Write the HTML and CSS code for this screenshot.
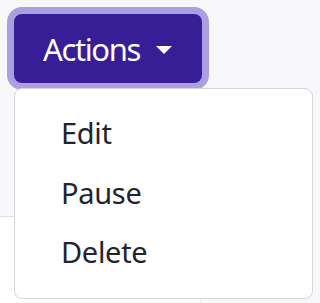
FILE: index.html
```html
<!DOCTYPE html>
<html>
<head>
<meta charset="utf-8">
<link rel="stylesheet" href="styles.css">
</head>
<body>
<div class="page">
  <div class="toolbar">
    <div class="dropdown">
      <button class="btn">Actions <span class="caret"></span></button>
      <ul class="menu">
        <li class="item">Edit</li>
        <li class="item">Pause</li>
        <li class="item">Delete</li>
      </ul>
    </div>
  </div>
  <div class="panel"></div>
</div>
</body>
</html>
```
FILE: styles.css
```css
html, body {
  margin: 0;
  padding: 0;
  background: #f8f8fa;
  font-family: "Noto Sans", "Open Sans", sans-serif;
}
.page {
  width: 319px;
  height: 303px;
  overflow: hidden;
}
.toolbar {
  height: 202px;
  padding: 14px 0 0 14px;
}
.dropdown {
  position: relative;
  display: inline-block;
}
.btn {
  display: flex;
  align-items: center;
  gap: 16px;
  width: 188px;
  height: 69px;
  padding: 0 0 0 29px;
  border: none;
  border-radius: 8px;
  background: #381e96;
  color: #ffffff;
  font-family: inherit;
  font-size: 31px;
  letter-spacing: -1.4px;
  box-shadow: 0 0 0 7px #ab9fe2;
  box-sizing: border-box;
}
.caret {
  width: 0;
  height: 0;
  border-left: 8.5px solid transparent;
  border-right: 8.5px solid transparent;
  border-top: 8px solid #ffffff;
  margin-top: 2px;
}
.menu {
  position: absolute;
  top: 74px;
  left: 0;
  width: 299px;
  height: 211px;
  margin: 0;
  padding: 14px 0 0 0;
  list-style: none;
  background: #ffffff;
  border: 1px solid #d6d6dc;
  border-radius: 8px;
  box-sizing: border-box;
  z-index: 2;
}
.item {
  height: 59.5px;
  line-height: 59.5px;
  padding-left: 46px;
  font-size: 29px;
  letter-spacing: -0.3px;
  color: #23232b;
}
.panel {
  width: 200px;
  height: 120px;
  background: #ffffff;
  border-top: 1px solid #dee0e4;
  border-right: 1px solid #eeeef1;
}
```
